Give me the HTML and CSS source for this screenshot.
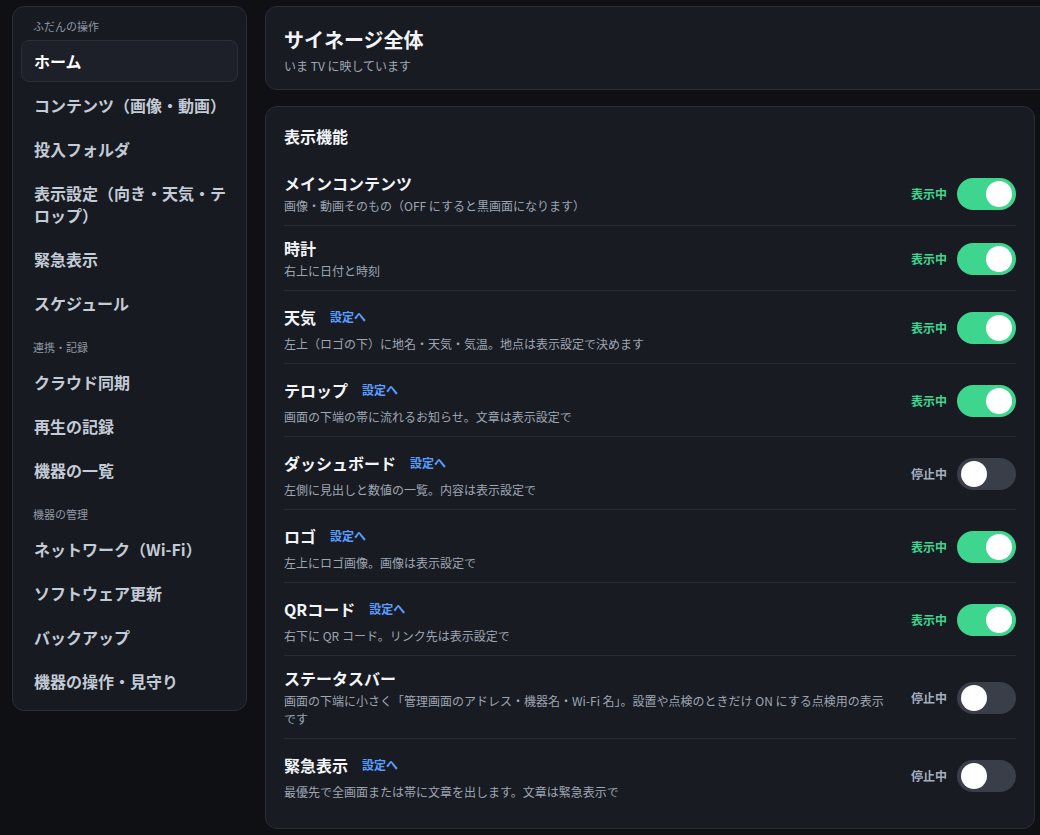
FILE: index.html
```html
<!DOCTYPE html>
<html lang="ja">
<head>
    <meta charset="UTF-8">
    <meta name="viewport" content="width=device-width, initial-scale=1.0">
    <title>サイネージ全体</title>
    <link rel="stylesheet" href="styles.css">
</head>
<body>
    <nav class="sidebar">
        <div class="nav-label">ふだんの操作</div>
        <a class="nav-item active">ホーム</a>
        <a class="nav-item">コンテンツ（画像・動画）</a>
        <a class="nav-item">投入フォルダ</a>
        <a class="nav-item">表示設定（向き・天気・テロップ）</a>
        <a class="nav-item">緊急表示</a>
        <a class="nav-item">スケジュール</a>
        <div class="nav-label next">連携・記録</div>
        <a class="nav-item">クラウド同期</a>
        <a class="nav-item">再生の記録</a>
        <a class="nav-item">機器の一覧</a>
        <div class="nav-label next">機器の管理</div>
        <a class="nav-item">ネットワーク（Wi-Fi）</a>
        <a class="nav-item">ソフトウェア更新</a>
        <a class="nav-item">バックアップ</a>
        <a class="nav-item">機器の操作・見守り</a>
    </nav>

    <main class="main">
        <section class="card head-card">
            <h1>サイネージ全体</h1>
            <p class="sub">いま TV に映しています</p>
        </section>

        <section class="card">
            <h2>表示機能</h2>

            <div class="row">
                <div class="info">
                    <div class="title"><span>メインコンテンツ</span></div>
                    <p class="desc">画像・動画そのもの（OFF にすると黒画面になります）</p>
                </div>
                <div class="state"><span class="state-text on">表示中</span><span class="switch on"></span></div>
            </div>

            <div class="row">
                <div class="info">
                    <div class="title"><span>時計</span></div>
                    <p class="desc">右上に日付と時刻</p>
                </div>
                <div class="state"><span class="state-text on">表示中</span><span class="switch on"></span></div>
            </div>

            <div class="row">
                <div class="info">
                    <div class="title"><span>天気</span><a class="go">設定へ</a></div>
                    <p class="desc">左上（ロゴの下）に地名・天気・気温。地点は表示設定で決めます</p>
                </div>
                <div class="state"><span class="state-text on">表示中</span><span class="switch on"></span></div>
            </div>

            <div class="row">
                <div class="info">
                    <div class="title"><span>テロップ</span><a class="go">設定へ</a></div>
                    <p class="desc">画面の下端の帯に流れるお知らせ。文章は表示設定で</p>
                </div>
                <div class="state"><span class="state-text on">表示中</span><span class="switch on"></span></div>
            </div>

            <div class="row">
                <div class="info">
                    <div class="title"><span>ダッシュボード</span><a class="go">設定へ</a></div>
                    <p class="desc">左側に見出しと数値の一覧。内容は表示設定で</p>
                </div>
                <div class="state"><span class="state-text">停止中</span><span class="switch"></span></div>
            </div>

            <div class="row">
                <div class="info">
                    <div class="title"><span>ロゴ</span><a class="go">設定へ</a></div>
                    <p class="desc">左上にロゴ画像。画像は表示設定で</p>
                </div>
                <div class="state"><span class="state-text on">表示中</span><span class="switch on"></span></div>
            </div>

            <div class="row">
                <div class="info">
                    <div class="title"><span>QRコード</span><a class="go">設定へ</a></div>
                    <p class="desc">右下に QR コード。リンク先は表示設定で</p>
                </div>
                <div class="state"><span class="state-text on">表示中</span><span class="switch on"></span></div>
            </div>

            <div class="row">
                <div class="info">
                    <div class="title"><span>ステータスバー</span></div>
                    <p class="desc">画面の下端に小さく「管理画面のアドレス・機器名・Wi-Fi 名」。設置や点検のときだけ ON にする点検用の表示です</p>
                </div>
                <div class="state"><span class="state-text">停止中</span><span class="switch"></span></div>
            </div>

            <div class="row">
                <div class="info">
                    <div class="title"><span>緊急表示</span><a class="go">設定へ</a></div>
                    <p class="desc">最優先で全画面または帯に文章を出します。文章は緊急表示で</p>
                </div>
                <div class="state"><span class="state-text">停止中</span><span class="switch"></span></div>
            </div>
        </section>
    </main>
</body>
</html>
```

FILE: styles.css
```css
html, body {
    overflow: hidden;
}
body {
    margin: 0;
    padding: 6px 0 0 12px;
    background-color: #0f1014;
    color: #f2f4f7;
    font-family: "Noto Sans CJK JP", "Noto Sans", sans-serif;
    display: flex;
    align-items: flex-start;
    gap: 18px;
}

/* サイドバー */
.sidebar {
    width: 235px;
    box-sizing: border-box;
    flex-shrink: 0;
    padding: 8px;
    background: #171a20;
    border: 1px solid #292d36;
    border-radius: 12px;
    display: flex;
    flex-direction: column;
    gap: 2px;
}
.nav-label {
    font-size: 11px;
    line-height: 16px;
    color: #8f98a5;
    padding: 3px 12px 4px;
}
.nav-label.next {
    padding-top: 13px;
}
.nav-item {
    display: block;
    padding: 9px 10px 9px 12px;
    border: 1px solid transparent;
    border-radius: 8px;
    font-size: 16px;
    line-height: 22px;
    font-weight: 700;
    color: #c3cbd6;
    cursor: pointer;
}
.nav-item.active {
    background: #1d2028;
    border-color: #2b2f39;
    color: #ffffff;
}

/* メイン */
.main {
    width: 770px;
    flex-shrink: 0;
    display: flex;
    flex-direction: column;
    gap: 16px;
}
.card {
    background: #181b22;
    border: 1px solid #292d36;
    border-radius: 12px;
    padding: 17px 18px 18px;
}
.head-card {
    margin-right: -40px;
    padding: 18px 18px 14px;
}
.head-card h1 {
    margin: 0;
    font-size: 20px;
    line-height: 30px;
    font-weight: 700;
}
.head-card .sub {
    margin: 2px 0 0;
    font-size: 12px;
    line-height: 18px;
    color: #a0a8b4;
}
.card h2 {
    margin: 0 0 13px;
    font-size: 16px;
    line-height: 24px;
    font-weight: 700;
}

.row {
    display: flex;
    align-items: center;
    gap: 20px;
    padding: 11px 0 10px;
    border-bottom: 1px solid #272b33;
}
.row:last-child {
    border-bottom: none;
    padding-bottom: 9px;
}
.info {
    flex: 1;
    min-width: 0;
}
.title {
    display: flex;
    align-items: center;
    gap: 6px;
    font-size: 16px;
    line-height: 22px;
    font-weight: 700;
}
.go {
    padding: 6px 8px;
    font-size: 12px;
    line-height: 18px;
    color: #5b9dff;
    cursor: pointer;
}
.desc {
    margin: 3px 0 0;
    font-size: 12px;
    line-height: 18px;
    color: #9ea6b2;
}

.state {
    display: flex;
    align-items: center;
    gap: 10px;
    flex-shrink: 0;
}
.state-text {
    font-size: 12px;
    font-weight: 700;
    color: #a3afbf;
}
.state-text.on {
    color: #3ed68f;
}
.switch {
    position: relative;
    width: 59px;
    height: 32px;
    border-radius: 16px;
    background: #3a3e49;
}
.switch::after {
    content: "";
    position: absolute;
    top: 3px;
    left: 4px;
    width: 26px;
    height: 26px;
    border-radius: 50%;
    background: #ffffff;
}
.switch.on {
    background: #3ed68f;
}
.switch.on::after {
    left: auto;
    right: 4px;
}
```
